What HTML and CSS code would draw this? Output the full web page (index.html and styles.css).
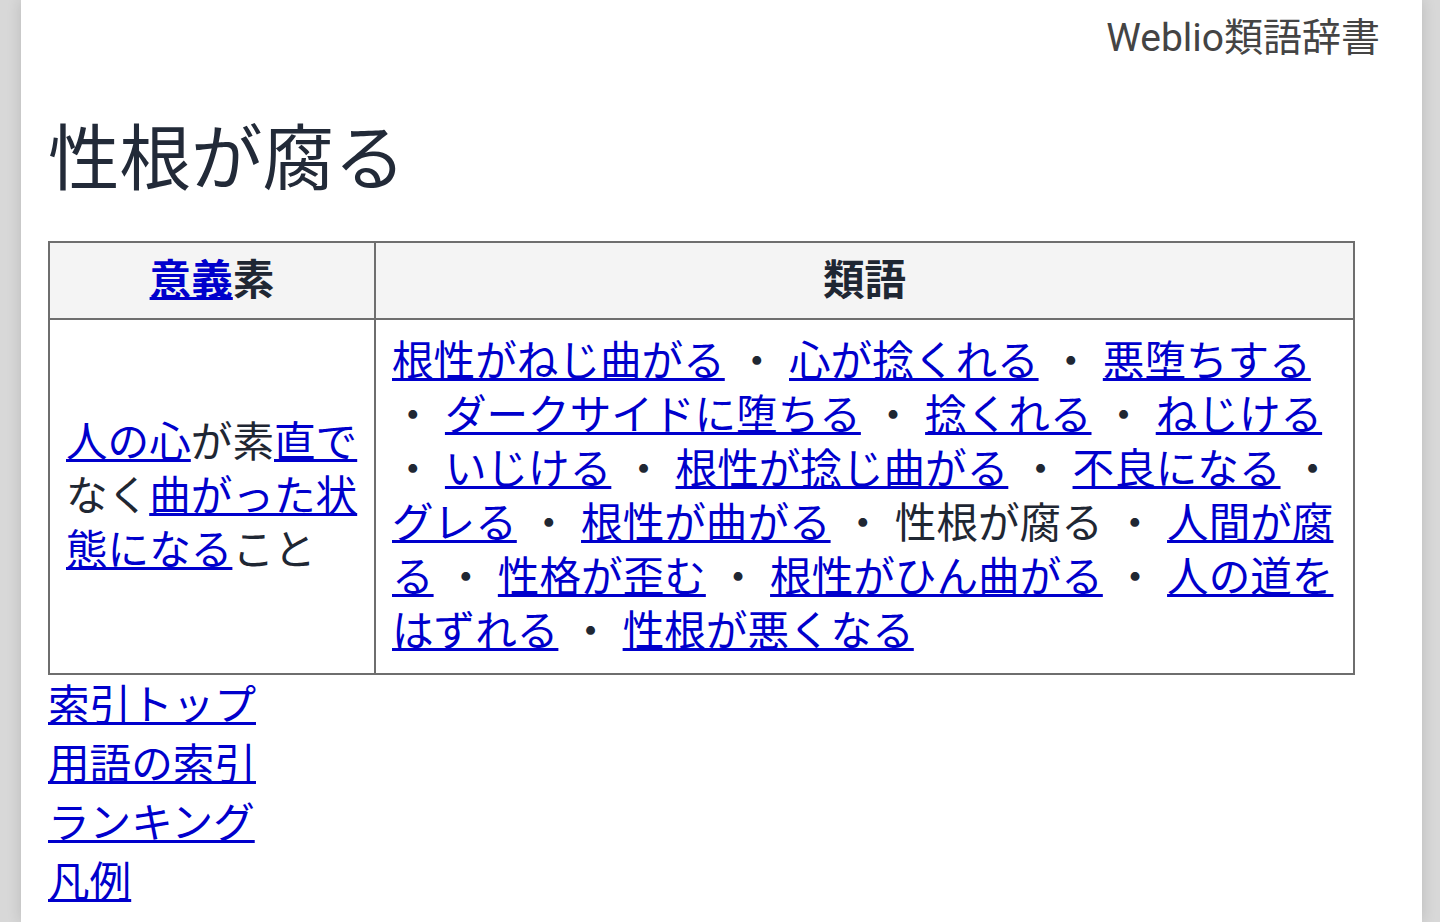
FILE: index.html
```html
<!DOCTYPE html>
<html lang="ja">
<head>
<meta charset="utf-8">
<title>性根が腐る - Weblio類語辞書</title>
<link rel="stylesheet" href="styles.css">
</head>
<body>
<div class="page">
  <header class="site-head">Weblio類語辞書</header>
  <h1 class="title">性根が腐る</h1>
  <table class="syn">
    <colgroup><col class="c1"><col class="c2"></colgroup>
    <thead>
      <tr><th><a href="#">意義</a>素</th><th>類語</th></tr>
    </thead>
    <tbody>
      <tr>
        <td class="meaning"><a href="#">人の心</a>が素<a href="#">直で</a>なく<a href="#">曲がった状態になる</a>こと</td>
        <td class="words"><a href="#">根性がねじ曲がる</a> ・ <a href="#">心が捻くれる</a> ・ <a href="#">悪堕ちする</a> ・ <a href="#">ダークサイドに堕ちる</a> ・ <a href="#">捻くれる</a> ・ <a href="#">ねじける</a> ・ <a href="#">いじける</a> ・ <a href="#">根性が捻じ曲がる</a> ・ <a href="#">不良になる</a> ・ <a href="#">グレる</a> ・ <a href="#">根性が曲がる</a> ・ 性根が腐る ・ <a href="#">人間が腐る</a> ・ <a href="#">性格が歪む</a> ・ <a href="#">根性がひん曲がる</a> ・ <a href="#">人の道をはずれる</a> ・ <a href="#">性根が悪くなる</a></td>
      </tr>
    </tbody>
  </table>
  <ul class="foot-links">
    <li><a href="#">索引トップ</a></li>
    <li><a href="#">用語の索引</a></li>
    <li><a href="#">ランキング</a></li>
    <li><a href="#">凡例</a></li>
  </ul>
</div>
</body>
</html>
```
FILE: styles.css
```css
html, body {
  margin: 0;
  padding: 0;
}
body {
  background: #d8d8d8;
  font-family: Roboto, "Noto Sans CJK JP", sans-serif;
  color: #1f2733;
}
.page {
  width: 1401px;
  margin-left: 21px;
  min-height: 922px;
  box-sizing: border-box;
  padding: 0 0 0 27px;
  background: #ffffff;
  box-shadow: 0 0 14px rgba(0, 0, 0, 0.14);
}
.site-head {
  text-align: right;
  font-size: 39px;
  line-height: 50px;
  padding: 13px 42px 0 0;
  color: #444444;
}
.title {
  font-size: 71.5px;
  line-height: 86px;
  font-weight: 400;
  margin: 54px 0 38px;
  color: #222a38;
}
a {
  color: #0000cc;
  text-decoration-thickness: 3px;
}
.syn {
  border-collapse: collapse;
  table-layout: fixed;
  width: 1307px;
  font-size: 41.6px;
  line-height: 54px;
}
.c1 {
  width: 326px;
}
.syn th,
.syn td {
  border: 2px solid #6e6e6e;
  padding: 15px 16px 14px;
}
.syn th {
  background: #f4f4f4;
  font-weight: 700;
  padding: 11px 16px 10px;
  text-align: center;
}
.meaning {
  vertical-align: middle;
  text-align: left;
  padding-right: 12px;
}
.words {
  word-spacing: 1px;
  padding-left: 14px;
}
.foot-links {
  list-style: none;
  margin: 0;
  padding: 1px 0 0;
  font-size: 41.6px;
  line-height: 59px;
}
```
